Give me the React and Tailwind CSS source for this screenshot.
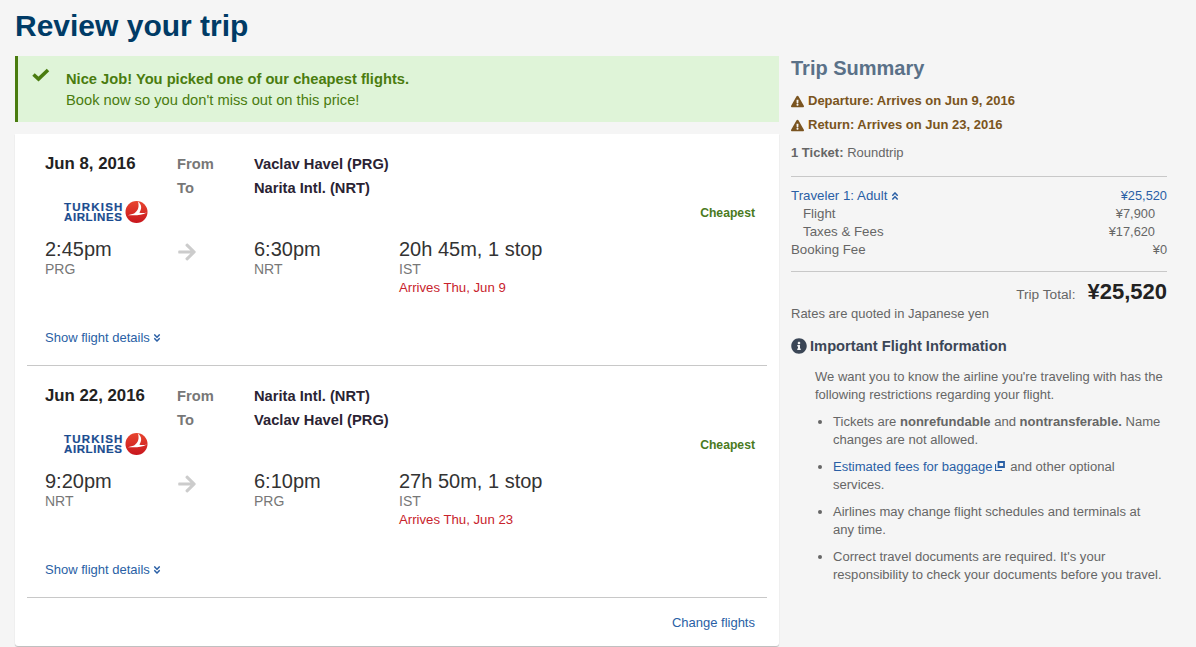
import React from 'react';
import { FaExclamationTriangle, FaInfoCircle, FaArrowRight, FaAngleDoubleDown, FaAngleDoubleUp } from 'react-icons/fa';

const flights = [
  { date: 'Jun 8, 2016', from: 'Vaclav Havel (PRG)', to: 'Narita Intl. (NRT)', dep: '2:45pm', depCode: 'PRG', arr: '6:30pm', arrCode: 'NRT', duration: '20h 45m, 1 stop', via: 'IST', arrives: 'Arrives Thu, Jun 9' },
  { date: 'Jun 22, 2016', from: 'Narita Intl. (NRT)', to: 'Vaclav Havel (PRG)', dep: '9:20pm', depCode: 'NRT', arr: '6:10pm', arrCode: 'PRG', duration: '27h 50m, 1 stop', via: 'IST', arrives: 'Arrives Thu, Jun 23' },
];

const TurkishLogo = () => (
  <div className="flex items-center h-[26px] pl-[19px]">
    <div className="text-[#1a4c8f] text-[11.5px] leading-[10px] font-bold w-[61px] [-webkit-text-stroke:0.2px_#1a4c8f]">
      <div className="tracking-[1.2px]">TURKISH</div>
      <div className="tracking-[0.6px]">AIRLINES</div>
    </div>
    <svg width="23" height="24" viewBox="0 0 24 24">
      <defs>
        <linearGradient id="thy" x1="0" y1="0" x2="0" y2="1">
          <stop offset="0" stopColor="#e8452f" />
          <stop offset="1" stopColor="#c8161d" />
        </linearGradient>
      </defs>
      <circle cx="12" cy="12" r="11.5" fill="url(#thy)" />
      <path d="M13.5 1C15 6 14 10.500 9.500 13.500L3 15.500L9 15.500C14 15.500 18 15 23 12.500C19 13.500 16 13 15 12.500C17.500 9 18 4.500 13.500 1Z" fill="#fff" />
    </svg>
  </div>
);

const Flight = ({ flight }) => (
  <div className="mx-3 border-b border-[#c8c8c8] h-[232px] pl-[18px] pr-3 pt-[18px]">
    <div className="flex h-[48px] text-[14.7px] leading-[24px]">
      <div className="w-[132px] font-bold text-[16.800px] text-[#222]">{flight.date}</div>
      <div className="w-[77px] font-bold text-[#777]">
        <div>From</div>
        <div>To</div>
      </div>
      <div className="font-bold text-[#2a2333]">
        <div>{flight.from}</div>
        <div>{flight.to}</div>
      </div>
    </div>
    <div className="flex justify-between items-center -mt-[1px]">
      <TurkishLogo />
      <div className="text-[12.2px] pt-[2px] font-bold text-[#4a7a1e]">Cheapest</div>
    </div>
    <div className="flex mt-[12px]">
      <div className="w-[132px]">
        <div className="text-[20px] leading-[24px] text-[#333]">{flight.dep}</div>
        <div className="text-[14px] leading-[16px] text-[#777]">{flight.depCode}</div>
      </div>
      <div className="w-[77px] pt-[5px] text-[#ccc] text-[20px]">
        <FaArrowRight />
      </div>
      <div className="w-[145px]">
        <div className="text-[20px] leading-[24px] text-[#333]">{flight.arr}</div>
        <div className="text-[14px] leading-[16px] text-[#777]">{flight.arrCode}</div>
      </div>
      <div>
        <div className="text-[20px] leading-[24px] text-[#333]">{flight.duration}</div>
        <div className="text-[14px] leading-[16px] text-[#777]">{flight.via}</div>
        <div className="text-[13.2px] leading-[20px] mt-[1px] text-[#c8232c]">{flight.arrives}</div>
      </div>
    </div>
    <div className="flex items-center gap-[2px] mt-[32px] text-[13px] leading-[16px] text-[#2a5fa5]">
      Show flight details <FaAngleDoubleDown className="text-[10px]" />
    </div>
  </div>
);

const PriceRow = ({ label, value, className }) => (
  <div className={`flex justify-between h-[18px] leading-[18px] ${className}`}>
    <span>{label}</span>
    <span className="text-[12.8px]">{value}</span>
  </div>
);

export default function App() {
  return (
    <div className="h-[647px] overflow-hidden bg-[#f5f5f5] px-[15px] font-['Liberation_Sans',Arial,sans-serif]">
      <h1 className="h-[56px] pt-[7px] text-[30px] leading-[38px] font-bold text-[#003b66]">Review your trip</h1>
      <div className="flex gap-3">
        <main className="w-[764px]">
          <div className="h-[66px] flex border-l-[3px] border-[#4a7c0f] bg-[#dff4d8] pl-[14px] pt-[13px] text-[#4a7c0f]">
            <svg width="18" height="14" viewBox="0 0 18 14" className="-mt-[1px] shrink-0">
              <path d="M1.500 6.500L6.500 11L16 2" fill="none" stroke="currentColor" strokeWidth="3.600" />
            </svg>
            <div className="ml-[16px] text-[14.7px] leading-[21px]">
              <div className="font-bold">Nice Job! You picked one of our cheapest flights.</div>
              <div>Book now so you don't miss out on this price!</div>
            </div>
          </div>
          <div className="mt-3 bg-white rounded-b-[3px] shadow-[0_1px_1px_#bbb] h-[512px]">
            {flights.map((f) => <Flight key={f.date} flight={f} />)}
            <div className="flex justify-end pr-[24px] pt-[16px] text-[13px] leading-[18px] text-[#2a5fa5]">Change flights</div>
          </div>
        </main>
        <aside className="w-[376px] text-[13px] text-[#666]">
          <h2 className="text-[20px] leading-[24px] font-bold text-[#5a7188]">Trip Summary</h2>
          <div className="mt-[9px] font-bold text-[13px] leading-[24px] text-[#7a5420]">
            <div className="flex items-center gap-[4px]"><FaExclamationTriangle className="text-[13px]" />Departure: Arrives on Jun 9, 2016</div>
            <div className="flex items-center gap-[4px]"><FaExclamationTriangle className="text-[13px]" />Return: Arrives on Jun 23, 2016</div>
          </div>
          <div className="mt-[4px] h-[36px] leading-[24px] border-b border-[#c8c8c8]"><b>1 Ticket:</b> Roundtrip</div>
          <div className="pt-[10px] pb-[12px] border-b border-[#c8c8c8] text-[13.3px]">
            <div className="flex justify-between h-[18px] leading-[18px] text-[#2a5fa5]">
              <span className="flex items-center gap-[3px]">Traveler 1: Adult <FaAngleDoubleUp className="text-[10px]" /></span>
              <span className="text-[12.8px]">¥25,520</span>
            </div>
            <PriceRow label="Flight" value="¥7,900" className="pl-3 pr-3" />
            <PriceRow label="Taxes & Fees" value="¥17,620" className="pl-3 pr-3" />
            <PriceRow label="Booking Fee" value="¥0" />
          </div>
          <div className="flex justify-end items-baseline gap-3 h-[33px] pt-[8px]">
            <span className="text-[13.7px]">Trip Total:</span>
            <span className="text-[22px] leading-[24px] font-bold text-[#222]">¥25,520</span>
          </div>
          <div className="leading-[18px]">Rates are quoted in Japanese yen</div>
          <div className="mt-[13px] flex items-center gap-[3px] text-[14.7px] leading-[20px] font-bold text-[#3b4656]">
            <FaInfoCircle className="text-[16px]" />Important Flight Information
          </div>
          <div className="pl-6 mt-[12px] leading-[18px]">
            <p>We want you to know the airline you're traveling with has the following restrictions regarding your flight.</p>
            <ul className="list-disc pl-[18px] pr-[4px] mt-[9px] space-y-[9px] text-[13.05px]">
              <li>Tickets are <b>nonrefundable</b> and <b>nontransferable.</b> Name changes are not allowed.</li>
              <li>
                <span className="text-[#2a5fa5]">Estimated fees for baggage</span>
                <svg width="10" height="10" viewBox="0 0 10 10" className="inline-block mx-[2px] align-baseline text-[#2a5fa5]">
                  <path d="M3.500 1H9V6H3.500Z" fill="none" stroke="currentColor" strokeWidth="1.800" />
                  <path d="M.5 3V9.500H7" fill="none" stroke="currentColor" strokeWidth="1.200" />
                </svg>
                {' '}and other optional services.
              </li>
              <li>Airlines may change flight schedules and terminals at any time.</li>
              <li>Correct travel documents are required. It's your responsibility to check your documents before you travel.</li>
            </ul>
          </div>
        </aside>
      </div>
    </div>
  );
}
